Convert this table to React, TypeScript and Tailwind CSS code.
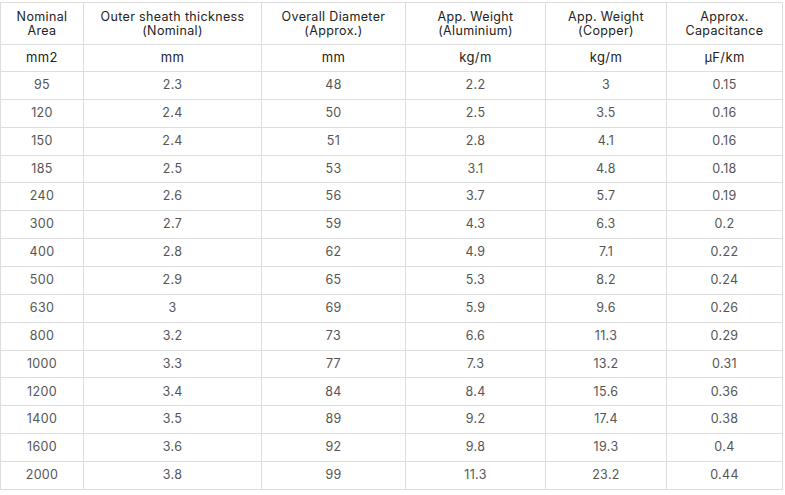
const headers = [
  ["Nominal", "Area"],
  ["Outer sheath thickness", "(Nominal)"],
  ["Overall Diameter", "(Approx.)"],
  ["App. Weight", "(Aluminium)"],
  ["App. Weight", "(Copper)"],
  ["Approx.", "Capacitance"],
];

const units = ["mm2", "mm", "mm", "kg/m", "kg/m", "μF/km"];

const rows = [
  ["95", "2.3", "48", "2.2", "3", "0.15"],
  ["120", "2.4", "50", "2.5", "3.5", "0.16"],
  ["150", "2.4", "51", "2.8", "4.1", "0.16"],
  ["185", "2.5", "53", "3.1", "4.8", "0.18"],
  ["240", "2.6", "56", "3.7", "5.7", "0.19"],
  ["300", "2.7", "59", "4.3", "6.3", "0.2"],
  ["400", "2.8", "62", "4.9", "7.1", "0.22"],
  ["500", "2.9", "65", "5.3", "8.2", "0.24"],
  ["630", "3", "69", "5.9", "9.6", "0.26"],
  ["800", "3.2", "73", "6.6", "11.3", "0.29"],
  ["1000", "3.3", "77", "7.3", "13.2", "0.31"],
  ["1200", "3.4", "84", "8.4", "15.6", "0.36"],
  ["1400", "3.5", "89", "9.2", "17.4", "0.38"],
  ["1600", "3.6", "92", "9.8", "19.3", "0.4"],
  ["2000", "3.8", "99", "11.3", "23.2", "0.44"],
];

const widths = ["w-[83px]", "w-[178px]", "w-[144px]", "w-[140px]", "w-[121px]", "w-[116px]"];

export default function App() {
  return (
    <div className="min-h-[495px] w-[785px] bg-white pt-[2px] font-['Inter',sans-serif]">
      <table className="w-[782px] table-fixed border-collapse text-[12.5px] tracking-[0.35px]">
        <colgroup>
          {widths.map((w, i) => <col key={i} className={w} />)}
        </colgroup>
        <thead>
          <tr className="h-[42px]">
            {headers.map((h, i) => (
              <th key={i} className="border border-[#dddddd] p-0 text-center font-normal leading-[14px] text-[#222]">
                {h[0]}<br />{h[1]}
              </th>
            ))}
          </tr>
          <tr className="h-[27px]">
            {units.map((u, i) => (
              <th key={i} className="border border-[#dddddd] p-0 text-center text-[13px] font-normal text-[#222]">{u}</th>
            ))}
          </tr>
        </thead>
        <tbody>
          {rows.map((r, ri) => (
            <tr key={ri} className="h-[27.87px]">
              {r.map((c, ci) => (
                <td key={ci} className="border border-[#dddddd] p-0 text-center text-[#555]">{c}</td>
              ))}
            </tr>
          ))}
        </tbody>
      </table>
    </div>
  );
}
